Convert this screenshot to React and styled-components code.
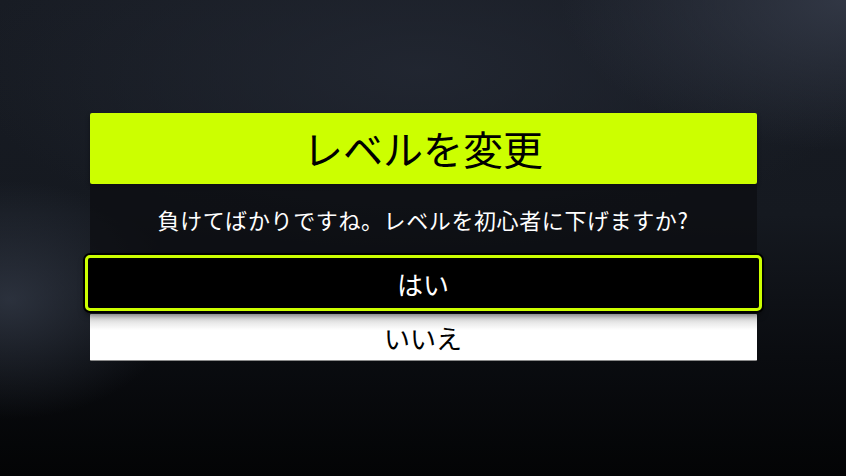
import React from 'react'
import styled, { createGlobalStyle } from 'styled-components'

const Lime = '#ccff00'

const GlobalStyle = createGlobalStyle`
  html, body {
    margin: 0;
    padding: 0;
    height: 100%;
  }
  body {
    font-family: 'Noto Sans CJK JP', 'Noto Sans', sans-serif;
  }
`

const Screen = styled.div`
  width: 846px;
  height: 476px;
  display: flex;
  align-items: flex-start;
  justify-content: center;
  padding-top: 113px;
  box-sizing: border-box;
  background:
    radial-gradient(ellipse 240px 170px at 10px 300px, rgba(62, 70, 86, 0.6), transparent 70%),
    radial-gradient(ellipse 380px 200px at 846px 0px, rgba(52, 58, 72, 0.9), transparent 75%),
    radial-gradient(ellipse 600px 240px at 420px 70px, rgba(34, 39, 50, 0.9), transparent 75%),
    linear-gradient(180deg, #181c24 0%, #151920 45%, #0a0c10 75%, #030405 100%);
`

const Dialog = styled.div`
  width: 667px;
  display: flex;
  flex-direction: column;
`

const Header = styled.div`
  height: 71px;
  background: ${Lime};
  border-radius: 2px;
  display: flex;
  align-items: center;
  justify-content: center;
  box-shadow: 0 2px 4px rgba(0, 0, 0, 0.4);
`

const Title = styled.h1`
  margin: 0;
  font-size: 40px;
  font-weight: 400;
  color: #000;
  padding-bottom: 2px;
`

const Message = styled.p`
  margin: 0;
  height: 70px;
  display: flex;
  align-items: center;
  justify-content: center;
  background: rgba(12, 14, 18, 0.75);
  color: #fff;
  font-size: 22px;
  letter-spacing: 0.6px;
  padding-bottom: 1px;
  box-sizing: border-box;
`

const Choices = styled.div`
  display: flex;
  flex-direction: column;
`

const Choice = styled.button`
  font-family: inherit;
  font-size: 26px;
  cursor: pointer;
  display: flex;
  align-items: center;
  justify-content: center;
  box-sizing: border-box;
  padding: 0;
  ${({ $focused }) =>
    $focused
      ? `
    position: relative;
    z-index: 1;
    height: 56px;
    margin: 1px -5px 0;
    background: #000;
    color: #fff;
    border: 3px solid ${Lime};
    border-radius: 5px;
    box-shadow: 0 0 0 2px #000, 0 4px 6px rgba(0, 0, 0, 0.5);
  `
      : `
    height: 47px;
    margin-top: 3px;
    background: linear-gradient(180deg, #cfcfcf 0%, #ffffff 35%, #ffffff 100%);
    color: #000;
    border: none;
    border-bottom: 1px solid #8a8a8a;
    border-radius: 1px;
  `}
`

const App = () => (
  <>
    <GlobalStyle />
    <Screen>
      <Dialog>
        <Header>
          <Title>レベルを変更</Title>
        </Header>
        <Message>負けてばかりですね。レベルを初心者に下げますか?</Message>
        <Choices>
          <Choice $focused>はい</Choice>
          <Choice>いいえ</Choice>
        </Choices>
      </Dialog>
    </Screen>
  </>
)

export default App
